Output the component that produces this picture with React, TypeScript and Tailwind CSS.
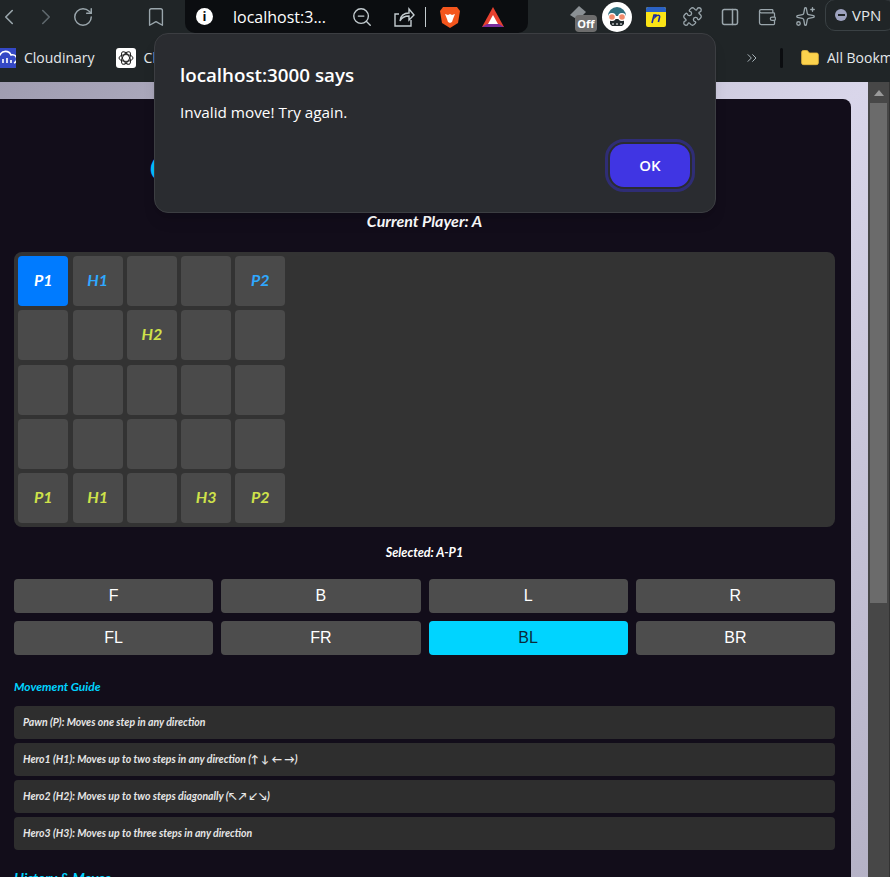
import React from 'react';
import { ChevronLeft, ChevronRight, RotateCw, Bookmark, ZoomOut, Puzzle, PanelRight, Wallet, Sparkles, ChevronsRight, Folder } from 'lucide-react';

const FONT = "font-['Lato',sans-serif] italic font-bold";
const ARIAL = "font-['Liberation_Sans',sans-serif]";
const UI = "font-['Open_Sans',sans-serif]";

type Side = 'a' | 'b' | 'sel' | '';

const board: { label: string; side: Side }[][] = [
    [{ label: 'P1', side: 'sel' }, { label: 'H1', side: 'b' }, { label: '', side: '' }, { label: '', side: '' }, { label: 'P2', side: 'b' }],
    [{ label: '', side: '' }, { label: '', side: '' }, { label: 'H2', side: 'a' }, { label: '', side: '' }, { label: '', side: '' }],
    [{ label: '', side: '' }, { label: '', side: '' }, { label: '', side: '' }, { label: '', side: '' }, { label: '', side: '' }],
    [{ label: '', side: '' }, { label: '', side: '' }, { label: '', side: '' }, { label: '', side: '' }, { label: '', side: '' }],
    [{ label: 'P1', side: 'a' }, { label: 'H1', side: 'a' }, { label: '', side: '' }, { label: 'H3', side: 'a' }, { label: 'P2', side: 'a' }],
];

const moves = ['F', 'B', 'L', 'R', 'FL', 'FR', 'BL', 'BR'];

const guide = [
    'Pawn (P): Moves one step in any direction',
    'Hero1 (H1): Moves up to two steps in any direction (↑ ↓ ← →)',
    'Hero2 (H2): Moves up to two steps diagonally (↖ ↗ ↙ ↘)',
    'Hero3 (H3): Moves up to three steps in any direction',
];

const Cell = ({ label, side }: { label: string; side: Side }) => {
    let cls = 'bg-[#4a4a4a]';
    if (side === 'sel') cls = 'bg-[#007bff] text-white';
    if (side === 'a') cls = 'bg-[#4a4a4a] text-[#cfe24a]';
    if (side === 'b') cls = 'bg-[#4a4a4a] text-[#2fa8ff]';
    return (
        <div className={`w-[50px] h-[50px] rounded-[4px] flex items-center justify-center pb-[3px] text-[16px] ${FONT} ${cls}`}>
            {label}
        </div>
    );
};

const BrowserBar = () => (
    <div className="h-[82px] bg-[#202527] flex flex-col shrink-0">
        <div className="h-[33px] flex items-center text-[#9aa6ac] relative *:shrink-0">
            <ChevronLeft size={26} strokeWidth={1.5} className="ml-[-4px]" />
            <ChevronRight size={26} strokeWidth={1.5} className="ml-[11px] text-[#5f686d]" />
            <RotateCw size={22} strokeWidth={1.6} className="ml-[13px]" />
            <Bookmark size={22} strokeWidth={1.5} className="ml-[51px]" />
            <div className="ml-[18px] w-[343px] h-[33px] bg-[#0b0d10] rounded-b-[10px] flex items-center">
                <div className={`ml-[11px] w-[17px] h-[17px] rounded-full bg-white text-[#0b0d10] text-[13px] leading-[17px] text-center font-bold ${UI}`}>i</div>
                <span className={`ml-[20px] text-white text-[16px] ${UI}`}>localhost:3...</span>
                <ZoomOut size={22} strokeWidth={1.5} className="ml-[25px] text-[#c4ccd0]" />
                <svg width="22" height="22" viewBox="0 0 22 22" fill="none" stroke="#c4ccd0" strokeWidth="1.4" className="ml-[20px]">
                    <path d="M6 8H2v12h16v-6" />
                    <path d="M7 15c0-5 4-8 9-8V3l5 6-5 5v-4c-4 0-7 1-9 5z" />
                </svg>
                <div className="ml-[10px] w-px h-[20px] bg-[#c4ccd0]" />
                <svg width="22" height="24" viewBox="0 0 22 24" className="ml-[13px]">
                    <path d="M4 2h14l3 4-2 12-8 5-8-5L1 6z" fill="#f4561d" />
                    <path d="M6 9l3 1 2-1 2 1 3-1-2 5-1 3-2 1-2-1-1-3z" fill="#fff" />
                </svg>
                <svg width="24" height="22" viewBox="0 0 24 22" className="ml-[20px]">
                    <path d="M12 1L23 21H1z" fill="#e8412f" />
                    <path d="M1 21l5-3h12l5 3z" fill="#7a2d9c" />
                    <path d="M12 9l5 9H7z" fill="#fff" />
                </svg>
            </div>
            <div className="ml-[41px] relative w-[24px] h-[32px]">
                <svg width="20" height="18" viewBox="0 0 20 18" className="absolute left-0 top-[3px]">
                    <path d="M1 11L10 2l7 6-8 8z" fill="#8a9094" />
                </svg>
                <div className={`absolute left-[6px] top-[14px] w-[22px] h-[17px] rounded-[4px] bg-[#6d6d6d] text-white text-[11px] leading-[17px] text-center font-bold ${UI}`}>Off</div>
            </div>
            <svg width="30" height="30" viewBox="0 0 30 30" className="ml-[9px]">
                <circle cx="15" cy="15" r="15" fill="#fff" />
                <path d="M6 14a9 9 0 0118 0z" fill="#2f6f7e" />
                <path d="M8 17h14v5l-2 2H10l-2-2z" fill="#20282c" />
                <path d="M11 23v-2M15 23v-2M19 23v-2" stroke="#fff" strokeWidth="1" />
                <circle cx="10" cy="15" r="3.4" fill="#f28b6b" stroke="#fff" strokeWidth="1.2" />
                <circle cx="20" cy="15" r="3.4" fill="#f28b6b" stroke="#fff" strokeWidth="1.2" />
            </svg>
            <svg width="20" height="20" viewBox="0 0 20 20" className="ml-[14px]">
                <rect width="20" height="20" rx="2" fill="#fbe416" />
                <path d="M0 2a2 2 0 012-2h16a2 2 0 012 2v3H0z" fill="#2b62c4" />
                <path d="M6 16l2-8h1.8l-.4 1.6C11 8 14 7.6 13.6 10l-1.2 5" fill="none" stroke="#1b2aa0" strokeWidth="1.6" />
            </svg>
            <Puzzle size={21} strokeWidth={1.5} className="ml-[16px]" />
            <PanelRight size={20} strokeWidth={1.8} className="ml-[17px]" />
            <Wallet size={20} strokeWidth={1.5} className="ml-[17px]" />
            <Sparkles size={21} strokeWidth={1.5} className="ml-[18px]" />
            <div className="ml-[9px] h-[32px] w-[70px] border border-[#3a4144] rounded-[10px] flex items-center pl-[9px] mt-[-3px]">
                <div className="w-[12px] h-[12px] rounded-full bg-[#9ea3c0] flex items-center justify-center">
                    <div className="w-[7px] h-[2px] bg-[#202527]" />
                </div>
                <span className={`ml-[5px] text-[15px] text-[#e4e8ea] ${UI}`}>VPN</span>
            </div>
        </div>
        <div className="flex-1 flex items-center text-[#e4e8ea] text-[14px] relative">
            <svg width="16" height="20" viewBox="0 0 16 20" className="shrink-0">
                <rect width="16" height="20" fill="#3448c5" />
                <path d="M-1 15a4 4 0 011-8 6 6 0 0111 0 4 4 0 013 8" fill="none" stroke="#fff" strokeWidth="1.6" />
                <path d="M3 15v-4M7 15v-5M11 15v-3" stroke="#fff" strokeWidth="1.6" />
            </svg>
            <span className={`ml-[8px] ${UI}`}>Cloudinary</span>
            <div className="ml-[21px] w-[20px] h-[20px] rounded-[3px] bg-white flex items-center justify-center">
                <svg width="16" height="16" viewBox="0 0 16 16" fill="none" stroke="#222" strokeWidth="1">
                    <ellipse cx="8" cy="8" rx="7" ry="3.4" />
                    <ellipse cx="8" cy="8" rx="7" ry="3.4" transform="rotate(60 8 8)" />
                    <ellipse cx="8" cy="8" rx="7" ry="3.4" transform="rotate(120 8 8)" />
                </svg>
            </div>
            <span className={`ml-[8px] ${UI}`}>Ch</span>
            <ChevronsRight size={16} strokeWidth={1.5} className="absolute left-[744px] text-[#a9b4b9]" />
            <div className="absolute left-[780px] w-[3px] h-[20px] rounded-full bg-[#0b0d10]" />
            <Folder size={20} fill="#fcd34d" strokeWidth={1} className="absolute left-[800px] text-[#e8b93c]" />
            <span className={`absolute left-[827px] whitespace-nowrap ${UI}`}>All Bookm</span>
        </div>
    </div>
);

const Dialog = () => (
    <div className={`absolute left-[154px] top-[33px] w-[562px] h-[180px] rounded-[14px] bg-[#2a2c30] border border-[#3c3e42] shadow-lg text-white ${UI}`}>
        <div className="absolute left-[25px] top-[29px] text-[18.75px] font-semibold leading-[24px] whitespace-nowrap">localhost:3000 says</div>
        <div className="absolute left-[25px] top-[68px] text-[15.3px] leading-[20px] whitespace-nowrap">Invalid move! Try again.</div>
        <button className="absolute left-[455px] top-[110px] w-[80px] h-[43px] rounded-[14px] bg-[#4035e3] outline-[3px] outline-offset-[2px] outline-[#2f2d75] text-[15px] font-semibold">OK</button>
    </div>
);

export default function App() {
    return (
        <div className="relative w-[890px] h-[877px] overflow-hidden flex flex-col bg-[#202527]">
            <BrowserBar />
            <div className="flex-1 flex overflow-hidden">
                <div className="flex-1 pt-[17px] bg-gradient-to-br from-[#9f9cb0] via-[#d9d6ea] to-[#b5b2c6] overflow-hidden">
                    <div className="w-[851px] h-[900px] bg-[#120d1a] rounded-tr-[8px] pl-[14px] pr-[16px] text-white">
                        <div className="h-[112px] flex items-end justify-center">
                            <h1 className={`${FONT} text-[#00c3ff] text-[34.5px] leading-none mb-[27px] whitespace-nowrap`}>Chess-Like Turn-Based Strategy Game</h1>
                        </div>
                        <div className={`${FONT} text-[16px] leading-[20px] text-center`}>Current Player: A</div>
                        <div className="mt-[21px] h-[275px] bg-[#333333] rounded-[8px] pl-[4.3px] pt-[4.2px] grid grid-cols-[repeat(5,50px)] gap-[4.25px] content-start">
                            {board.flat().map((c, i) => (
                                <Cell key={i} label={c.label} side={c.side} />
                            ))}
                        </div>
                        <div className={`${FONT} text-[12.6px] leading-[16px] text-center mt-[18px]`}>Selected: A-P1</div>
                        <div className="mt-[18px] grid grid-cols-4 gap-[8px]">
                            {moves.map((m) => (
                                <button key={m} className={`h-[34px] rounded-[4px] text-[16px] ${ARIAL} ${m === 'BL' ? 'bg-[#00d4ff] text-[#0a2a3a]' : 'bg-[#4d4d4d] text-white'}`}>{m}</button>
                            ))}
                        </div>
                        <h2 className={`${FONT} text-[#00d4ff] text-[12px] leading-[16px] mt-[24px]`}>Movement Guide</h2>
                        <div className="mt-[11px] flex flex-col gap-[4px]">
                            {guide.map((g) => (
                                <div key={g} className={`h-[33px] bg-[#2e2e2e] rounded-[4px] px-[9px] flex items-center text-[10.5px] text-[#e6e6e6] ${FONT}`}>{g}</div>
                            ))}
                        </div>
                        <h2 className={`${FONT} text-[#00d4ff] text-[14px] leading-[18px] mt-[19px]`}>History &amp; Moves</h2>
                    </div>
                </div>
                <div className="w-[22px] bg-[#474747] flex flex-col items-center shrink-0 border-r border-[#333]">
                    <div className="h-[21px] w-full flex items-center justify-center">
                        <div className="w-0 h-0 border-x-[5px] border-x-transparent border-b-[6px] border-b-[#9a9a9a]" />
                    </div>
                    <div className="w-[17px] h-[500px] bg-[#6b6b6b]" />
                </div>
            </div>
            <Dialog />
        </div>
    );
}
